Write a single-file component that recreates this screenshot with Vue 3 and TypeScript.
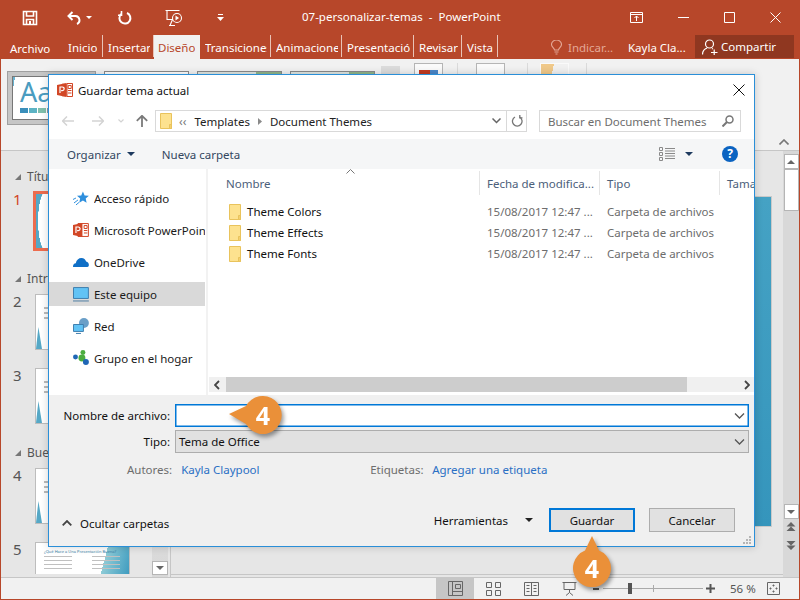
<script setup lang="ts">
interface Tab {
  label: string;
  width: number;
  active?: boolean;
}

const tabs: Tab[] = [
  { label: "Inicio", width: 40 },
  { label: "Insertar", width: 51 },
  { label: "Diseño", width: 46, active: true },
  { label: "Transiciones", width: 71 },
  { label: "Animaciones", width: 71 },
  { label: "Presentación", width: 72 },
  { label: "Revisar", width: 48 },
  { label: "Vista", width: 36 },
];

const places = [
  { label: "Acceso rápido", icon: "star" },
  { label: "Microsoft PowerPoint", icon: "ppt" },
  { label: "OneDrive", icon: "cloud" },
  { label: "Este equipo", icon: "pc", selected: true },
  { label: "Red", icon: "net" },
  { label: "Grupo en el hogar", icon: "home" },
];

const folders = ["Theme Colors", "Theme Effects", "Theme Fonts"];

const slides = [
  { section: "Títu", num: 1, current: true },
  { section: "Intr", num: 2 },
  { num: 3 },
  { section: "Bue", num: 4 },
  { num: 5, wide: true },
];
</script>

<template>
  <div class="app">
    <!-- title bar -->
    <header class="titlebar">
      <div class="qat">
        <svg width="16" height="16" viewBox="0 0 16 16" fill="none" stroke="#fff" stroke-width="1.6">
          <path d="M1.5 1.5h13v13h-13z" />
          <path d="M4.5 1.5v4.5h7v-4.5" />
          <path d="M4.5 14.5v-5h7v5" />
          <path d="M7 11h2v3.5h-2z" fill="#fff" stroke="none" />
        </svg>
        <svg class="q-undo" width="14" height="14" viewBox="0 0 14 14" fill="none" stroke="#fff" stroke-width="2">
          <path d="M5.500 1l-4 4 4 4" />
          <path d="M2 5h6.500a4.200 4.200 0 0 1 1.500 8" />
        </svg>
        <span class="tri-w"></span>
        <svg class="q-redo" width="14" height="14" viewBox="0 0 14 14" fill="none" stroke="#fff" stroke-width="2">
          <path d="M9 2a5.500 5.500 0 1 1-5.800 1" />
          <path d="M3.500 0v4.200h-3.500" stroke-width="1.600" />
        </svg>
        <svg class="q-show" width="20" height="18" viewBox="0 0 20 18" fill="none" stroke="#fff" stroke-width="1.100">
          <path d="M0.500 1.500h14M2 1.500v9h6" />
          <circle cx="12" cy="9" r="4.500" />
          <path d="M10.500 6.600l3.600 2.400-3.600 2.400z" fill="#fff" stroke="none" />
          <path d="M5 16.500l2.500-6M4 16.500h6" />
        </svg>
        <svg class="q-more" width="7" height="7" viewBox="0 0 7 7" fill="#fff">
          <path d="M1 0h5v1h-5zM0 3h7l-3.500 4z" />
        </svg>
      </div>
      <div class="doc-title">07-personalizar-temas&nbsp; -&nbsp; PowerPoint</div>
      <div class="winctl">
        <svg width="13" height="11" viewBox="0 0 13 11" fill="none" stroke="#fff">
          <path d="M0.500 0.500h12v10h-12zM0.500 2.500h12M6.500 9v-5M4.500 6l2-2 2 2" />
        </svg>
        <svg class="w-btn" width="11" height="11" viewBox="0 0 11 11" stroke="#fff"><path d="M0 5.500h11" /></svg>
        <svg class="w-btn" width="11" height="11" viewBox="0 0 11 11" fill="none" stroke="#fff"><path d="M0.500 0.500h10v10h-10z" /></svg>
        <svg class="w-btn" width="11" height="11" viewBox="0 0 11 11" stroke="#fff"><path d="M0.500 0.500l10 10M10.500 0.500l-10 10" /></svg>
      </div>
    </header>

    <!-- ribbon tabs -->
    <nav class="tabs">
      <span class="tab-file">Archivo</span>
      <span
        v-for="t in tabs"
        :key="t.label"
        class="tab"
        :class="{ 'tab--active': t.active }"
        :style="{ width: t.width + 'px' }"
      ><span class="tab-text">{{ t.label }}</span></span>
      <span class="tab-spacer"></span>
      <svg class="bulb" width="11" height="15" viewBox="0 0 11 15" fill="none" stroke="#e4a897" stroke-width="1.100">
        <path d="M3.500 10c0-2-3-3-3-5.500a5 4.500 0 0 1 10 0c0 2.500-3 3.500-3 5.500z" />
        <path d="M3.500 12h4M4.500 14h2" />
      </svg>
      <span class="tell">Indicar...</span>
      <span class="user">Kayla Cla...</span>
      <span class="share">
        <svg width="16" height="16" viewBox="0 0 16 16" fill="none" stroke="#fff" stroke-width="1.200">
          <circle cx="7.500" cy="5" r="4" />
          <path d="M0.500 15.500c0-3.500 2-5.500 4.500-6.500M10 9.500l1 .5M9 13.500h6.500M12.200 10.500v5.500" />
        </svg>
        Compartir
      </span>
    </nav>

    <!-- ribbon -->
    <section class="ribbon">
      <div class="gallery">
        <div class="theme theme--on">
          <div class="theme-inner">
            <span class="aa">Aa</span>
            <div class="swatches"><i></i><i></i><i></i><i></i></div>
          </div>
        </div>
        <div class="theme"></div>
        <div class="theme theme--green"></div>
        <div class="theme theme--green"></div>
        <div class="gallery-scroll"></div>
      </div>
      <div class="rb-group rb-group--a"><span class="rb-btn rb-btn--first"><i></i></span></div>
      <div class="rb-group rb-group--b"><span class="rb-btn"></span></div>
      <div class="rb-group rb-group--c"><span class="rb-btn rb-btn--yellow"></span></div>
      <svg class="collapse" width="10" height="6" viewBox="0 0 10 6" fill="none" stroke="#777" stroke-width="1.600">
        <path d="M0.500 5.500l4.500-4.500 4.500 4.500" />
      </svg>
    </section>

    <!-- workspace -->
    <main class="work">
      <aside class="thumbs">
        <div class="thumb-list">
          <template v-for="s in slides" :key="s.num">
            <div v-if="s.section" class="sec" :class="{ 'sec--first': s.current }">
              <span class="sec-tri"></span>{{ s.section }}tulo
            </div>
            <div class="slide-row" :class="{ 'slide-row--wide': s.wide, 'slide-row--first': s.current }">
              <span class="num" :class="{ 'num--on': s.current }">{{ s.num }}</span>
              <div v-if="s.wide" class="th th--wide">
                <div class="th5-title">¿Qué Hace a Una Presentación Buena?</div>
                <div class="th5-cols">
                  <span></span><span></span>
                </div>
              </div>
              <div v-else class="th" :class="{ 'th--on': s.current }"><span class="th-lines"></span><span class="th-ink"></span></div>
            </div>
          </template>
        </div>
        <div class="thumb-scroll">
          <span class="tsb-btn"><i></i></span>
        </div>
      </aside>
      <div class="canvas">
        <div class="canvas-stage">
          <div class="slide"></div>
        </div>
        <div class="notes-line"></div>
      </div>
      <div class="vscroll">
        <div class="vs-top">
          <span class="vs-btn"><i></i></span>
          <span class="vs-thumb"></span>
        </div>
        <div class="vs-bottom">
          <span class="vs-btn vs-btn--down"><i></i></span>
          <svg class="vs-prev" width="10" height="10" viewBox="0 0 10 10" fill="#666"><path d="M5 0l4.500 4.500h-9zM5 4.500l4.500 4.500h-9z" /></svg>
          <svg class="vs-next" width="10" height="10" viewBox="0 0 10 10" fill="#666"><path d="M5 5.500l4.500-4.500h-9zM5 10l4.500-4.500h-9z" /></svg>
        </div>
      </div>
    </main>

    <!-- status bar -->
    <footer class="status">
      <span class="view view--on">
        <svg width="15" height="15" viewBox="0 0 15 15" fill="none" stroke="#666"><path d="M0.500 0.500h14v14h-14zM4.500 0.500v14M4.500 10.500h10M7.500 3.500h5v4h-5z" /></svg>
      </span>
      <span class="view">
        <svg width="15" height="14" viewBox="0 0 15 14" fill="none" stroke="#666"><path d="M0.500 0.500h5v5h-5zM9.500 0.500h5v5h-5zM0.500 8.500h5v5h-5zM9.500 8.500h5v5h-5z" /></svg>
      </span>
      <span class="view">
        <svg width="15" height="14" viewBox="0 0 15 14" fill="none" stroke="#666"><path d="M0.500 0.500h14v13h-14zM7.500 0.500v13M2.500 3.500h3M2.500 6.500h3M2.500 9.500h3M9.500 3.500h3M9.500 6.500h3M9.500 9.500h3" /></svg>
      </span>
      <span class="view">
        <svg width="15" height="14" viewBox="0 0 15 14" fill="none" stroke="#666"><path d="M0.500 0.500h14M2 0.500v7h11v-7M7.500 7.500v3M4 13.500l3.500-3 3.500 3" /></svg>
      </span>
      <div class="zoom-slider">
        <svg width="8" height="8" viewBox="0 0 8 8" fill="#555"><path d="M1 3h6v2h-6z" /></svg>
        <div class="z-track"><i class="z-thumb"></i><i class="z-tick"></i></div>
        <svg width="9" height="9" viewBox="0 0 9 9" fill="#555"><path d="M0 3.500h9v2h-9zM3.500 0h2v9h-2z" /></svg>
      </div>
      <span class="pct">56 %</span>
      <svg width="13" height="13" viewBox="0 0 13 13" fill="none" stroke="#666">
        <path d="M0.500 0.500h12v12h-12zM6.500 2.500v2M5.500 3.500h2M6.500 8.500v2M5.500 9.500h2M2.500 6.500h2M3.500 5.500v2M8.500 6.500h2M9.500 5.500v2" />
      </svg>
    </footer>

    <!-- save dialog -->
    <div class="dialog">
      <div class="dlg-title">
        <svg width="16" height="16" viewBox="0 0 16 16">
          <path d="M5 1.500h10.500v13h-10.500z" fill="#e8a090" />
          <path d="M10 1.500h5.500v13h-5.500z" fill="#fff" stroke="#d24726" />
          <path d="M11 8.500h3.500M11 11h3.500M11.200 3.500h3v3h-3z" stroke="#d24726" fill="none" />
          <path d="M0 3l9.500-2v14l-9.500-2z" fill="#d24726" />
          <path d="M3 11v-6h2.300a1.800 1.800 0 0 1 0 3.700h-1.200" fill="none" stroke="#fff" stroke-width="1.200" />
        </svg>
        <span>Guardar tema actual</span>
        <svg class="dlg-close" width="12" height="12" viewBox="0 0 12 12" stroke="#111"><path d="M0.500 0.500l11 11M11.500 0.500l-11 11" /></svg>
      </div>

      <div class="dlg-nav">
        <svg width="12" height="10" viewBox="0 0 12 10" fill="none" stroke="#d3d3d3" stroke-width="1.500"><path d="M5 0.500l-4.500 4.500 4.500 4.500M0.500 5h11.500" /></svg>
        <svg class="n-fwd" width="12" height="10" viewBox="0 0 12 10" fill="none" stroke="#d3d3d3" stroke-width="1.500"><path d="M7 0.500l4.500 4.500-4.500 4.500M11.500 5h-11.500" /></svg>
        <svg class="n-down" width="6" height="4" viewBox="0 0 6 4" fill="none" stroke="#d3d3d3" stroke-width="1.200"><path d="M0.500 0.500l2.500 2.500 2.500-2.500" /></svg>
        <svg class="n-up" width="12" height="12" viewBox="0 0 12 12" fill="none" stroke="#7a7a7a" stroke-width="1.800"><path d="M0.800 5.800l5.200-5 5.200 5M6 1v11" /></svg>
        <div class="addr">
          <svg width="12" height="16" viewBox="0 0 12 16"><path d="M0.500 0.500h11v15h-11z" fill="#fde28f" stroke="#e9c35c" /><path d="M9.500 11.500h2v4h-2z" fill="#f4d06f" stroke="#e9c35c" /></svg>
          <span class="crumb-more">‹‹</span>
          <span class="crumb">Templates</span>
          <svg width="4" height="7" viewBox="0 0 4 7" fill="#8a8a8a"><path d="M0 0l4 3.500-4 3.500z" /></svg>
          <span class="crumb">Document Themes</span>
          <span class="addr-fill"></span>
          <svg class="addr-chev" width="9" height="6" viewBox="0 0 9 6" fill="none" stroke="#666" stroke-width="1.500"><path d="M0.500 0.500l4 4 4-4" /></svg>
          <span class="addr-refresh">
            <svg width="12" height="12" viewBox="0 0 12 12" fill="none" stroke="#777" stroke-width="1.300"><path d="M4 2a4.800 4.800 0 1 0 4.500 0" /><path d="M8.800 0v2.800h2.700" /></svg>
          </span>
        </div>
        <div class="search">
          <span>Buscar en Document Themes</span>
          <svg width="12" height="12" viewBox="0 0 12 12" fill="none" stroke="#777" stroke-width="1.500"><circle cx="7.500" cy="4.500" r="3.500" /><path d="M5 7l-4.500 4.500" stroke-width="2" /></svg>
        </div>
      </div>

      <div class="dlg-toolbar">
        <span>Organizar</span>
        <span class="tri-d"></span>
        <span class="tb-new">Nueva carpeta</span>
        <span class="tb-fill"></span>
        <svg width="16" height="14" viewBox="0 0 16 14" fill="none" stroke="#8a8a8a"><path d="M0.500 0.500h3v3h-3zM0.500 5.500h3v3h-3zM0.500 10.500h3v3h-3zM6 1.500h10M6 4h10M6 6.500h10M6 9h10M6 11.500h10" /></svg>
        <span class="tri-d tri-view"></span>
        <span class="help">?</span>
      </div>

      <div class="dlg-body">
        <div class="sidebar">
          <div v-for="p in places" :key="p.label" class="place" :class="{ 'place--on': p.selected }">
            <svg width="16" height="16" viewBox="0 0 16 16">
              <template v-if="p.icon === 'star'">
                <path d="M10 1.500l1.700 3.900 4.300.4-3.200 2.800.9 4.200-3.700-2.200-3.700 2.200.9-4.200-3.200-2.800 4.300-.4z" fill="#2e8fdd" />
                <path d="M1 13l4-3M0 9.500l3-1.500M3 15l3-2.500" stroke="#2e8fdd" fill="none" />
              </template>
              <template v-else-if="p.icon === 'ppt'">
                <path d="M5 1.500h10.500v13h-10.500z" fill="#fff" stroke="#d24726" />
                <path d="M11 8.500h3.500M11 11h3.500M11.200 3.500h3v3h-3z" stroke="#d24726" fill="none" />
                <path d="M0 3l9.500-2v14l-9.500-2z" fill="#d24726" />
                <path d="M3 11v-6h2.300a1.800 1.800 0 0 1 0 3.700h-1.200" fill="none" stroke="#fff" stroke-width="1.200" />
              </template>
              <template v-else-if="p.icon === 'cloud'">
                <path d="M0 13c0-2.500 1-3.500 2.800-3.700.5-3.300 3-5.300 5.700-5.300 2.500 0 4.200 1.500 4.700 3.600 1.800.2 2.800 1.800 2.800 3.400 0 1.200-.7 2-1.500 2z" fill="#0f6fc6" />
              </template>
              <template v-else-if="p.icon === 'pc'">
                <path d="M0.500 1.500h15v11h-15z" fill="#62c3f5" stroke="#3f7fae" />
                <path d="M0 15h16" stroke="#7d9cb5" stroke-width="1.500" />
              </template>
              <template v-else-if="p.icon === 'net'">
                <circle cx="11" cy="5" r="5" fill="#6a9fc8" />
                <path d="M0.500 6.500h10v7h-10z" fill="#62c3f5" stroke="#3f7fae" />
                <path d="M3 15.500h5" stroke="#3f7fae" />
              </template>
              <template v-else>
                <circle cx="2.500" cy="7" r="2.500" fill="#1f66b5" />
                <circle cx="10" cy="2.500" r="2.500" fill="#4bac3f" />
                <circle cx="9" cy="8" r="3.500" fill="#4bac3f" />
                <circle cx="13" cy="12" r="3" fill="#1f66b5" />
              </template>
            </svg>
            <span class="place-text">{{ p.label }}</span>
          </div>
        </div>
        <div class="files">
          <div class="file-head">
            <span class="col col-name">Nombre</span>
            <svg class="sort" width="9" height="5" viewBox="0 0 9 5" fill="none" stroke="#777"><path d="M0.500 4.500l4-4 4 4" /></svg>
            <span class="col col-date">Fecha de modifica...</span>
            <span class="col col-type">Tipo</span>
            <span class="col col-size">Tamaño</span>
          </div>
          <div class="file-rows">
            <div v-for="f in folders" :key="f" class="file-row">
              <span class="col-name file-name">
                <svg width="13" height="16" viewBox="0 0 13 16"><path d="M0.500 0.500h11v15h-11z" fill="#fde28f" stroke="#e9c35c" /><path d="M9.500 11.500h2v4h-2z" fill="#f4d06f" stroke="#e9c35c" /></svg>
                {{ f }}
              </span>
              <span class="col-date file-sub">15/08/2017 12:47 ...</span>
              <span class="col-type file-sub">Carpeta de archivos</span>
            </div>
          </div>
          <div class="hscroll">
            <svg class="hs-l" width="6" height="10" viewBox="0 0 6 10" fill="none" stroke="#444" stroke-width="1.800"><path d="M5 1l-4 4 4 4" /></svg>
            <span class="hs-thumb"></span>
            <svg class="hs-r" width="6" height="10" viewBox="0 0 6 10" fill="none" stroke="#444" stroke-width="1.800"><path d="M1 1l4 4-4 4" /></svg>
          </div>
        </div>
      </div>

      <div class="dlg-form">
        <div class="form-row">
          <label class="f-label">Nombre de archivo:</label>
          <div class="f-input">
            <svg width="11" height="6" viewBox="0 0 11 6" fill="none" stroke="#555" stroke-width="1.300"><path d="M1 0.500l4.500 4.500 4.500-4.500" /></svg>
          </div>
        </div>
        <div class="form-row form-row--type">
          <label class="f-label">Tipo:</label>
          <div class="f-select">
            <span>Tema de Office</span>
            <svg width="11" height="6" viewBox="0 0 11 6" fill="none" stroke="#555" stroke-width="1.300"><path d="M1 0.500l4.500 4.500 4.500-4.500" /></svg>
          </div>
        </div>
        <div class="meta">
          <span class="m-label">Autores:</span>
          <a class="m-link m-author">Kayla Claypool</a>
          <span class="m-label m-tags">Etiquetas:</span>
          <a class="m-link">Agregar una etiqueta</a>
        </div>
        <div class="actions">
          <svg class="hide-chev" width="10" height="6" viewBox="0 0 10 6" fill="none" stroke="#444" stroke-width="1.800"><path d="M0.700 5.300l4.300-4.300 4.300 4.300" /></svg>
          <span class="hide-folders">Ocultar carpetas</span>
          <span class="tb-fill"></span>
          <span class="tools">Herramientas</span>
          <span class="tri-k"></span>
          <button class="btn btn--primary">Guardar</button>
          <button class="btn">Cancelar</button>
        </div>
        <svg class="grip" width="9" height="9" viewBox="0 0 9 9" fill="#b5b5b5">
          <path d="M6 0h2v2h-2zM3 3h2v2h-2zM6 3h2v2h-2zM0 6h2v2h-2zM3 6h2v2h-2zM6 6h2v2h-2z" />
        </svg>
      </div>
    </div>

    <!-- step callouts -->
    <div class="callout callout--left">
      <svg width="54" height="42" viewBox="0 0 54 42"><path d="M1 18l17-8a19 19 0 1 1 0 18z" fill="#ea9039" /></svg>
      <span class="callout-num">4</span>
    </div>
    <div class="callout callout--up">
      <svg width="40" height="58" viewBox="0 0 40 58"><path d="M20 7l7 14.500a19 19 0 1 1-14 0z" fill="#ea9039" /></svg>
      <span class="callout-num">4</span>
    </div>
  </div>
</template>

<style scoped>
.app {
  position: relative;
  width: 800px;
  height: 600px;
  box-sizing: border-box;
  overflow: hidden;
  display: flex;
  flex-direction: column;
  background: #e6e6e6;
  border: solid #b7472a;
  border-width: 0 1px 1px;
  font-family: "Noto Sans", "Open Sans", sans-serif;
  font-size: 11.5px;
  color: #222;
}

/* title bar */
.titlebar {
  height: 35px;
  margin: 0 -1px;
  padding-left: 22px;
  display: flex;
  align-items: center;
  background: #b7472a;
  color: #fff;
  flex: none;
}
.qat {
  width: 280px;
  display: flex;
  align-items: center;
}
.q-undo { margin-left: 29px; }
.tri-w {
  width: 0;
  height: 0;
  margin-left: 5px;
  border: 3px solid transparent;
  border-top: 3px solid #fff;
  border-bottom: 0;
}
.q-redo { margin-left: 26px; }
.q-show { margin-left: 33px; }
.q-more { margin-left: 32px; }
.doc-title {
  white-space: nowrap;
  width: 329px;
  margin-top: -2px;
}
.winctl {
  display: flex;
  align-items: center;
  margin-left: -1px;
}
.w-btn { margin-left: 35px; }

/* tabs */
.tabs {
  height: 24px;
  margin: 0 -1px;
  padding-left: 10px;
  display: flex;
  align-items: stretch;
  background: #b7472a;
  color: #fff;
  flex: none;
}
.tab-file {
  width: 53px;
  align-self: center;
  margin-top: 3px;
}
.tab {
  box-sizing: border-box;
  display: flex;
  align-items: center;
  padding: 2px 3px 0 5px;
  overflow: hidden;
  white-space: nowrap;
  border-right: 1px solid #e9c3b7;
  margin-bottom: 2px;
}
.tab-text {
  display: block;
  min-width: 0;
  overflow: hidden;
}
.tab--active {
  background: #f1f1f1;
  color: #b7472a;
  border-right: 0;
  margin-bottom: 0;
  padding-bottom: 2px;
  padding-left: 4px;
}
.tab-spacer { flex: 1; }
.bulb {
  align-self: center;
  margin-right: 6px;
}
.tell {
  align-self: center;
  color: #e4a897;
  width: 60px;
}
.user {
  align-self: center;
  width: 67px;
}
.share {
  width: 99px;
  margin: 0 6px 1px 0;
  padding-left: 7px;
  box-sizing: border-box;
  display: flex;
  align-items: center;
  gap: 3px;
  background: #8f3720;
}

/* ribbon */
.ribbon {
  height: 92px;
  flex: none;
  display: flex;
  position: relative;
  background: #f1f1f1;
  border-bottom: 1px solid #c6c6c6;
  box-sizing: border-box;
}
.gallery {
  display: flex;
  align-items: flex-start;
  gap: 8px;
  padding: 12px 0 0 6px;
  width: 407px;
  box-sizing: border-box;
  flex: none;
}
.theme {
  width: 85px;
  height: 54px;
  box-sizing: border-box;
  background: #fff;
  border: 1px solid #8a8a8a;
}
.theme--green {
  background: linear-gradient(90deg, #dfe6e2 70%, #8fb58a 70%);
}
.theme--on {
  width: 89px;
  padding: 4px;
  background: #c6c6c6;
  border: 1px solid #a0a0a0;
}
.theme-inner {
  height: 100%;
  box-sizing: border-box;
  padding-left: 7px;
  background: linear-gradient(100deg, #69b3d0 2px, #fff 2px);
  border: 1px solid #777;
}
.aa {
  display: block;
  font-size: 27px;
  line-height: 30px;
  color: #4a9cc0;
}
.swatches {
  display: flex;
  gap: 1px;
  margin-top: 1px;
}
.swatches i {
  width: 8px;
  height: 5px;
  background: #3a8fbb;
}
.swatches i:nth-child(2) { background: #5cb3c4; }
.swatches i:nth-child(3) { background: #7fbfac; }
.swatches i:nth-child(4) { background: #8a9aa0; }
.gallery-scroll {
  width: 19px;
  height: 58px;
  margin: -5px 0 0 -2px;
  background: #dcdcdc;
}
.rb-group {
  border-right: 1px solid #dadada;
  height: 82px;
  margin-top: 4px;
  flex: none;
  box-sizing: border-box;
}
.rb-group--a { width: 50px; padding-left: 6px; }
.rb-group--b { width: 70px; padding-left: 18px; }
.rb-group--c { width: 59px; padding-left: 12px; }
.rb-btn {
  display: block;
  width: 29px;
  height: 30px;
  box-sizing: border-box;
  border: 1px solid #b5b5b5;
  background: #fafafa;
}
.rb-btn--first i {
  display: block;
  margin: 6px 4px;
  height: 6px;
  background: linear-gradient(90deg, #c23b22 60%, #4a86c8 60%);
}
.rb-btn--yellow {
  border-color: #fafafa;
  background: linear-gradient(100deg, #f0c98a 40%, #f1f1f1 40%);
}
.collapse {
  position: absolute;
  right: 10px;
  bottom: 5px;
}

/* workspace */
.work {
  flex: 1;
  min-height: 0;
  display: flex;
}
.thumbs {
  width: 169px;
  flex: none;
  display: flex;
  overflow: hidden;
}
.thumb-list {
  width: 150px;
  flex: none;
  padding-top: 17px;
  overflow: hidden;
}
.sec {
  height: 17px;
  margin-top: 20px;
  padding-left: 14px;
  display: flex;
  align-items: center;
  gap: 6px;
  color: #555;
  font-size: 12px;
}
.sec--first { margin-top: 0; }
.sec-tri {
  width: 0;
  height: 0;
  border-style: solid;
  border-width: 0 0 6px 6px;
  border-color: transparent transparent #777 transparent;
}
.slide-row {
  display: flex;
  height: 56px;
  margin-top: 7px;
  padding-left: 34px;
  position: relative;
}
.slide-row + .slide-row { margin-top: 18px; }
.slide-row--first { height: 58px; }
.slide-row--wide { height: 32px; }
.num {
  position: absolute;
  left: 12px;
  top: -3px;
  font-size: 15px;
  color: #555;
}
.num--on { color: #d24726; }
.th {
  width: 95px;
  height: 56px;
  box-sizing: border-box;
  background: #fff;
  border: 1px solid #bdbdbd;
  position: relative;
  overflow: hidden;
}
.th-lines {
  position: absolute;
  left: 8px;
  top: 12px;
  width: 30px;
  height: 15px;
  background: repeating-linear-gradient(180deg, #bbb 0 2px, transparent 2px 5px);
}
.th-ink {
  position: absolute;
  left: 0;
  bottom: 0;
  width: 6px;
  height: 22px;
  background: #55a8c6;
  clip-path: polygon(40% 0, 100% 100%, 0 100%);
}
.th--on {
  height: 60px;
  margin: -1px 0 0 -2px;
  border: 3px solid #ed6c4e;
}
.th--on .th-lines { display: none; }
.th--on .th-ink {
  top: 0;
  width: 11px;
  height: 54px;
  clip-path: none;
  background: radial-gradient(ellipse 8px 30px at 10px 50%, #fff 98%, transparent 100%), #55a8c6;
}
.th--wide {
  height: 32px;
  padding: 6px 0 0 8px;
  background: linear-gradient(105deg, #fff 72%, #8ecbd6 72%, #3f9cc0);
  border-bottom: 0;
  font-size: 4px;
  line-height: 5px;
  color: #3a7fa8;
  white-space: nowrap;
}
.th5-cols {
  display: flex;
  gap: 20px;
  margin-top: 2px;
}
.th5-cols span {
  width: 28px;
  height: 15px;
  background: repeating-linear-gradient(180deg, #c0c0c0 0 1px, transparent 1px 4px);
}
.thumb-scroll {
  width: 16px;
  margin-left: 1px;
  background: linear-gradient(180deg, #e6e6e6 60%, #d8d8d8);
  display: flex;
  flex-direction: column;
  justify-content: flex-end;
  padding-bottom: 2px;
}
.tsb-btn {
  height: 14px;
  box-sizing: border-box;
  background: #fff;
  border: 1px solid #b5b5b5;
  display: flex;
  align-items: center;
  justify-content: center;
}
.tsb-btn i {
  width: 0;
  height: 0;
  border: 4px solid transparent;
  border-top: 4px solid #666;
  border-bottom: 0;
}
.canvas {
  flex: 1;
  min-width: 0;
  display: flex;
  flex-direction: column;
  border-left: 1px solid #c6c6c6;
}
.canvas-stage {
  flex: 1;
  min-height: 0;
  display: flex;
  justify-content: flex-end;
  padding: 45px 11px 47px 12px;
}
.slide {
  flex: 1;
  background: linear-gradient(180deg, #45a2c4, #3595bc);
  border: solid #c9c9c9;
  border-width: 1px 1px 1px 0;
}
.notes-line {
  height: 1px;
  flex: none;
  margin-bottom: 2px;
  background: #c6c6c6;
}
.vscroll {
  width: 16px;
  flex: none;
  background: #d8d8d8;
  display: flex;
  flex-direction: column;
  justify-content: space-between;
  padding: 3px 0 27px;
  box-sizing: border-box;
}
.vs-top,
.vs-bottom {
  display: flex;
  flex-direction: column;
  align-items: center;
}
.vs-btn {
  width: 15px;
  height: 15px;
  box-sizing: border-box;
  background: #fff;
  border: 1px solid #b5b5b5;
  display: flex;
  align-items: center;
  justify-content: center;
}
.vs-btn i {
  width: 0;
  height: 0;
  border: 4px solid transparent;
  border-top: 0;
  border-bottom: 4px solid #666;
}
.vs-btn--down i {
  border-bottom: 0;
  border-top: 4px solid #666;
}
.vs-thumb {
  width: 15px;
  height: 42px;
  box-sizing: border-box;
  background: #fff;
  border: 1px solid #b5b5b5;
}
.vs-prev { margin-top: 3px; }
.vs-next { margin-top: 8px; }

/* status bar */
.status {
  height: 22px;
  flex: none;
  box-sizing: border-box;
  display: flex;
  align-items: center;
  padding-left: 435px;
  background: #f1f1f1;
  border-top: 1px solid #c6c6c6;
  color: #555;
}
.view {
  width: 38px;
  height: 100%;
  display: flex;
  align-items: center;
  justify-content: center;
}
.view--on { background: #c6c6c6; }
.zoom-slider {
  display: flex;
  align-items: center;
  margin-left: 4px;
}
.z-track {
  position: relative;
  width: 100px;
  height: 1px;
  margin: 0 3px;
  background: #aaa;
}
.z-thumb {
  position: absolute;
  left: 25px;
  top: -5px;
  width: 4px;
  height: 11px;
  background: #555;
}
.z-tick {
  position: absolute;
  left: 50px;
  top: -3px;
  width: 1px;
  height: 7px;
  background: #aaa;
}
.pct {
  margin-left: 15px;
  width: 37px;
  white-space: nowrap;
}

/* dialog */
.dialog {
  position: absolute;
  left: 47px;
  top: 74px;
  width: 707px;
  height: 473px;
  box-sizing: border-box;
  display: flex;
  flex-direction: column;
  background: #fff;
  border: 1px solid #2a8fd8;
  box-shadow: 0 0 8px rgba(0, 0, 0, 0.18);
  color: #1a1a1a;
}
.dlg-title {
  height: 30px;
  flex: none;
  display: flex;
  align-items: center;
  gap: 5px;
  padding-left: 8px;
  color: #111;
}
.dlg-close {
  margin-left: auto;
  margin-right: 9px;
}
.dlg-nav {
  height: 33px;
  flex: none;
  display: flex;
  align-items: center;
  padding: 0 13px 3px 13px;
  box-sizing: border-box;
  margin-top: 1px;
}
.n-fwd { margin-left: 18px; }
.n-down { margin-left: 14px; }
.n-up { margin-left: 12px; }
.addr {
  margin-left: 7px;
  width: 372px;
  height: 22px;
  box-sizing: border-box;
  border: 1px solid #d9d9d9;
  display: flex;
  align-items: center;
  padding-left: 4px;
  gap: 8px;
}
.crumb-more {
  color: #777;
  font-size: 12px;
  margin-left: -1px;
}
.crumb { color: #222; }
.addr-fill { flex: 1; margin-left: -8px; }
.addr-chev { margin-right: -3px; }
.addr-refresh {
  width: 19px;
  height: 100%;
  border-left: 1px solid #d9d9d9;
  display: flex;
  align-items: center;
  justify-content: center;
}
.search {
  margin-left: 12px;
  width: 202px;
  height: 22px;
  box-sizing: border-box;
  border: 1px solid #d9d9d9;
  display: flex;
  align-items: center;
  justify-content: space-between;
  padding: 0 6px 0 8px;
  color: #6d6d6d;
}
.dlg-toolbar {
  height: 30px;
  flex: none;
  display: flex;
  align-items: center;
  padding-left: 18px;
  background: #f5f6f7;
  color: #33475f;
}
.tri-d {
  width: 0;
  height: 0;
  margin-left: 6px;
  border: 4px solid transparent;
  border-top: 4px solid #1e3a5f;
  border-bottom: 0;
}
.tb-new { margin-left: 27px; }
.tb-fill { flex: 1; }
.tri-view { margin-left: 10px; }
.help {
  width: 16px;
  height: 16px;
  margin: 0 16px 0 29px;
  border-radius: 50%;
  background: #0b63c1;
  color: #fff;
  font-weight: 700;
  font-size: 12px;
  line-height: 16px;
  text-align: center;
}
.dlg-body {
  flex: 1;
  min-height: 0;
  display: flex;
}
.sidebar {
  width: 159px;
  flex: none;
  box-sizing: border-box;
  border-right: 2px solid #f2f2f2;
  padding-top: 17px;
  display: flex;
  flex-direction: column;
  gap: 8px;
}
.place {
  height: 24px;
  flex: none;
  margin-right: 1px;
  padding-left: 24px;
  display: flex;
  align-items: center;
  gap: 5px;
  overflow: hidden;
  white-space: nowrap;
}
.place--on { background: #d9d9d9; }
.place-text {
  overflow: hidden;
  width: 112px;
}
.files {
  flex: 1;
  min-width: 0;
  display: flex;
  flex-direction: column;
}
.file-head {
  position: relative;
  height: 26px;
  flex: none;
  box-sizing: border-box;
  padding-top: 2px;
  display: flex;
  align-items: center;
  color: #4c607a;
}
.sort {
  position: absolute;
  left: 138px;
  top: 0;
}
.col-name {
  width: 272px;
  padding-left: 18px;
  box-sizing: border-box;
}
.col-date {
  width: 120px;
  padding-left: 7px;
  box-sizing: border-box;
}
.col-type {
  width: 120px;
  padding-left: 7px;
  box-sizing: border-box;
}
.col-size {
  flex: 1;
  padding-left: 7px;
  white-space: nowrap;
  overflow: hidden;
}
.col {
  height: 100%;
  display: flex;
  align-items: center;
  border-right: 1px solid #e5e5e5;
  white-space: nowrap;
}
.col-size.col { border-right: 0; }
.file-rows {
  flex: 1;
  padding-top: 6px;
}
.file-row {
  height: 21px;
  display: flex;
  align-items: center;
  white-space: nowrap;
}
.file-name {
  display: flex;
  align-items: center;
  gap: 5px;
  padding-left: 21px;
  color: #111;
}
.file-sub { color: #6d6d6d; }
.hscroll {
  height: 15px;
  flex: none;
  margin: 0 0 3px 1px;
  display: flex;
  align-items: center;
  background: #f0f0f0;
}
.hs-l { margin-left: 5px; }
.hs-thumb {
  width: 461px;
  height: 100%;
  margin-left: 6px;
  background: #cdcdcd;
}
.hs-r { margin-left: auto; margin-right: 4px; }
.dlg-form {
  position: relative;
  height: 151px;
  flex: none;
  box-sizing: border-box;
  padding: 9px 5px 0 0;
  background: #f0f0f0;
}
.form-row {
  display: flex;
  align-items: center;
  height: 23px;
}
.form-row--type { margin-top: 3px; }
.f-label {
  width: 121px;
  text-align: right;
  padding-right: 5px;
  color: #111;
  flex: none;
}
.f-input,
.f-select {
  flex: 1;
  height: 100%;
  box-sizing: border-box;
  display: flex;
  align-items: center;
  justify-content: flex-end;
  padding-right: 3px;
}
.f-input {
  background: #fff;
  border: 1px solid #0078d7;
  box-shadow: inset 0 0 0 0.5px #0078d7;
}
.f-select {
  justify-content: space-between;
  padding-left: 3px;
  background: #e1e1e1;
  border: 1px solid #adadad;
  color: #111;
}
.meta {
  display: flex;
  align-items: center;
  margin: 8px 0 0 78px;
  height: 17px;
}
.m-label { color: #6d6d6d; }
.m-link { color: #2a6fc4; }
.m-author {
  width: 189px;
  margin-left: 9px;
}
.m-tags { width: 62px; }
.actions {
  display: flex;
  align-items: center;
  margin-top: 30px;
  padding: 0 14px 0 13px;
  height: 24px;
}
.hide-chev { margin-top: 6px; }
.hide-folders {
  margin-left: 8px;
  margin-top: 6px;
  color: #111;
}
.tools { color: #111; margin-top: 1px; }
.tri-k {
  width: 0;
  height: 0;
  margin: 0 16px 0 17px;
  border: 4px solid transparent;
  border-top: 4px solid #222;
  border-bottom: 0;
}
.btn {
  width: 86px;
  height: 24px;
  box-sizing: border-box;
  font: inherit;
  color: #111;
  background: #e1e1e1;
  border: 1px solid #adadad;
  padding: 0;
}
.btn--primary {
  border: 2px solid #0078d7;
  margin-right: 14px;
}
.grip {
  position: absolute;
  right: 2px;
  bottom: 1px;
}

/* callouts */
.callout {
  position: absolute;
  filter: drop-shadow(2px 3px 2px rgba(0, 0, 0, 0.4));
}
.callout svg { display: block; }
.callout-num {
  position: absolute;
  color: #fff;
  font-family: "Open Sans", sans-serif;
  font-weight: 700;
  font-size: 25px;
  line-height: 38px;
  width: 38px;
  text-align: center;
}
.callout--left {
  left: 227px;
  top: 396px;
}
.callout--left .callout-num {
  left: 16px;
  top: 0;
}
.callout--up {
  left: 571px;
  top: 529px;
}
.callout--up .callout-num {
  left: 1px;
  top: 20px;
}
</style>

<style>
html,
body {
  margin: 0;
  background: #fff;
}
</style>
